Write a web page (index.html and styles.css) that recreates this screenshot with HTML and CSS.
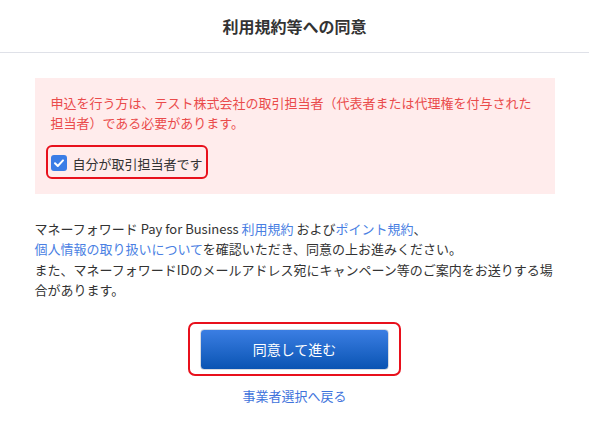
FILE: index.html
```html
<!DOCTYPE html>
<html lang="ja">
<head>
<meta charset="utf-8">
<title>利用規約等への同意</title>
<link rel="stylesheet" href="styles.css">
</head>
<body>
<header class="header">
  <h1 class="title">利用規約等への同意</h1>
</header>
<main class="main">
  <section class="notice">
    <p class="notice-text">申込を行う方は、テスト株式会社の取引担当者（代表者または代理権を付与された担当者）である必要があります。</p>
    <label class="check-row highlight">
      <span class="checkbox"><svg width="16" height="16" viewBox="0 0 16 16"><path d="M4 8.2 L6.8 11 L12 5.4" fill="none" stroke="#fff" stroke-width="2" stroke-linecap="round" stroke-linejoin="round"/></svg></span>
      <span class="check-label">自分が取引担当者です</span>
    </label>
  </section>
  <p class="terms">マネーフォワード Pay for Business <a class="link" href="#">利用規約</a> および<a class="link" href="#">ポイント規約</a>、<br><a class="link" href="#">個人情報の取り扱いについて</a>を確認いただき、同意の上お進みください。<br>また、マネーフォワードIDのメールアドレス宛にキャンペーン等のご案内をお送りする場合があります。</p>
  <div class="actions">
    <div class="btn-wrap highlight-btn">
      <button class="btn" type="button">同意して進む</button>
    </div>
    <a class="back" href="#">事業者選択へ戻る</a>
  </div>
</main>
</body>
</html>
```
FILE: styles.css
```css
* { box-sizing: border-box; }
body {
  margin: 0;
  font-family: "Noto Sans CJK JP", "Noto Sans", sans-serif;
  color: #333;
  background: #fff;
}
.header {
  height: 53px;
  border-bottom: 1px solid #dfe1e8;
  display: flex;
  align-items: center;
  justify-content: center;
}
.title {
  margin: 0;
  font-size: 16px;
  font-weight: 700;
  line-height: 20px;
  color: #333;
  padding-bottom: 1px;
}
.main {
  width: 520px;
  margin: 0 auto;
  padding-top: 25px;
}
.notice {
  background: #ffecec;
  padding: 15px 16px 18px;
}
.notice-text {
  margin: 0;
  font-size: 13px;
  line-height: 20px;
  color: #ea4b4b;
}
.check-row {
  margin-top: 20px;
  display: inline-flex;
  align-items: center;
  gap: 6px;
  height: 20px;
  position: relative;
}
.highlight::after {
  content: "";
  position: absolute;
  top: -8px;
  bottom: -6px;
  left: -5px;
  right: -5px;
  border: 2px solid #e8101c;
  border-radius: 6px;
}
.checkbox {
  width: 16px;
  height: 16px;
  border-radius: 3px;
  background: #3b7de6;
  display: flex;
}
.check-label {
  font-size: 13px;
  line-height: 20px;
  color: #333;
  padding-top: 2px;
}
.terms {
  margin: 25px 0 0;
  font-size: 13px;
  line-height: 20.3px;
  color: #333;
}
.link {
  color: #4a7fe3;
  text-decoration: none;
}
.actions {
  display: flex;
  flex-direction: column;
  align-items: center;
  margin-top: 29px;
}
.btn-wrap {
  position: relative;
}
.highlight-btn::after {
  content: "";
  position: absolute;
  top: -7px;
  bottom: -6px;
  left: -12px;
  right: -12px;
  border: 2px solid #e8101c;
  border-radius: 7px;
}
.btn {
  width: 189px;
  height: 41px;
  border: 1px solid #d9dce2;
  border-radius: 4px;
  background: linear-gradient(#3b7ee3, #0a54b3);
  color: #fff;
  font-family: inherit;
  font-size: 14px;
  padding: 0 0 2px;
  display: block;
}
.back {
  margin-top: 16px;
  font-size: 13px;
  line-height: 20px;
  color: #3f74dc;
  text-decoration: none;
}
```
